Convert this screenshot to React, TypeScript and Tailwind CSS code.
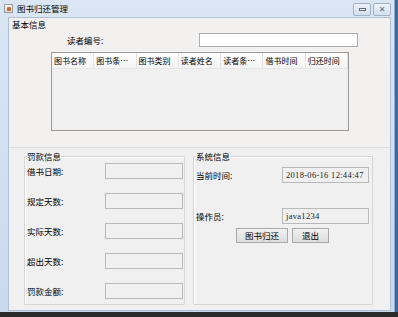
import React from "react";

const cjk = { fontFamily: '"Noto Sans CJK SC", "Noto Sans", sans-serif' };
const serif = { fontFamily: '"Liberation Serif", "DejaVu Serif", serif' };

const columns = ["图书名称", "图书条…", "图书类别", "读者姓名", "读者条…", "借书时间", "归还时间"];
const fineRows = ["借书日期:", "规定天数:", "实际天数:", "超出天数:", "罚款金额:"];

// Swing-style titled groupbox, title sits on the etched line
const GroupBox: React.FC<{ title: string; className: string; children: React.ReactNode }> = ({ title, className, children }) => (
  <fieldset className={`border border-[#d5d5d5] shadow-[inset_1px_1px_0_#ffffff] rounded-[1px] ${className}`}>
    <legend className="ml-[2px] px-0 text-[8.5px] leading-[10px] text-black">{title}</legend>
    {children}
  </fieldset>
);

const Field: React.FC<{ value?: string; className?: string }> = ({ value, className }) => (
  <div className={`h-[16px] border border-[#b9b9b9] bg-[#f0f0f0] flex items-center pl-[3px] text-[8.5px] tracking-[0.3px] text-[#222] ${className ?? ""}`} style={serif}>
    {value}
  </div>
);

export default function App() {
  return (
    <div className="w-[398px] h-[317px] bg-[#3a6aa0] overflow-hidden" style={cjk}>
      <div className="w-[395px] h-[312px] bg-gradient-to-b from-[#dbe6f4] to-[#c9d9ee] flex flex-col border-r border-[#8ea9cc]">
        {/* title bar */}
        <div className="h-[17px] flex items-center pl-[4px] pr-[3px] shrink-0">
          <div className="w-[9px] h-[9px] border border-[#9a9a9a] bg-gradient-to-b from-[#ffffff] to-[#d8d8d8] flex items-center justify-center">
            <div className="w-[4px] h-[4px] bg-[#c86b2a] rounded-[1px]" />
          </div>
          <span className="ml-[4px] text-[8.5px] leading-none text-black">图书归还管理</span>
          <div className="ml-auto flex gap-[2px] mt-[2px]">
            <div className="w-[18px] h-[13px] rounded-[2px] border border-[#9fb2c9] bg-gradient-to-b from-[#eef3f9] to-[#d3deeb] flex items-center justify-center">
              <div className="w-[7px] h-[3px] border border-[#5a6b80] bg-white" />
            </div>
            <div className="w-[18px] h-[13px] rounded-[2px] border border-[#9fb2c9] bg-gradient-to-b from-[#eef3f9] to-[#d3deeb] flex items-center justify-center text-[8px] leading-none text-[#5a6b80]" style={{ fontFamily: '"DejaVu Sans", sans-serif' }}>
              ✕
            </div>
          </div>
        </div>

        {/* content pane */}
        <div className="flex-1 ml-[8px] mr-[3px] mb-[1px] bg-[#f0f0f0] flex flex-col border border-[#aebfd6]">
          {/* 基本信息 */}
          <div className="h-[130px] shrink-0 bg-[#f3f0f0] border-b border-[#dcdcdc] flex flex-col">
            <div className="pl-[3px] pt-[1px] text-[8.5px] leading-[10px] text-black">基本信息</div>
            <div className="flex items-center mt-[4px] h-[14px]">
              <span className="ml-[58px] text-[8.5px] text-black">读者编号:</span>
              <div className="ml-[96px] w-[159px] h-[14px] border border-[#abadb3] bg-white" />
            </div>
            <div className="ml-[42px] mt-[5px] w-[298px] h-[79px] border border-[#9a9a9a] bg-[#f0f0f0]">
              <div className="h-[16px] grid grid-cols-7 bg-gradient-to-b from-[#ffffff] to-[#f4f4f4] border-b border-[#e6e6e6]">
                {columns.map(c => (
                  <div key={c} className="pl-[2px] flex items-center text-[8px] text-black border-r border-[#e2e2e2] whitespace-nowrap overflow-hidden">
                    {c}
                  </div>
                ))}
              </div>
            </div>
          </div>

          {/* lower area */}
          <div className="flex-1 flex items-start pt-[3px]">
            <GroupBox title="罚款信息" className="ml-[15px] w-[161px] h-[154px] flex flex-col">
              <div className="flex flex-col gap-[14px] pt-[2px]">
                {fineRows.map(label => (
                  <div key={label} className="flex items-center h-[16px]">
                    <span className="ml-[2px] w-[78px] text-[8.5px] text-black">{label}</span>
                    <Field className="w-[78px]" />
                  </div>
                ))}
              </div>
            </GroupBox>

            <GroupBox title="系统信息" className="ml-[8px] w-[180px] h-[154px] flex flex-col">
              <div className="flex items-center h-[16px] mt-[6px]">
                <span className="ml-[2px] w-[86px] text-[8.5px] text-black">当前时间:</span>
                <Field className="w-[87px]" value="2018-06-16 12:44:47" />
              </div>
              <div className="flex items-center h-[16px] mt-[25px]">
                <span className="ml-[2px] w-[86px] text-[8.5px] text-black">操作员:</span>
                <Field className="w-[87px]" value="java1234" />
              </div>
              <div className="flex mt-[4px] ml-[42px] gap-[4px]">
                <button className="w-[52px] h-[15px] border border-[#a9a9a9] bg-gradient-to-b from-[#f2f2f2] to-[#dcdcdc] text-[8.5px] leading-none text-black">图书归还</button>
                <button className="w-[37px] h-[15px] border border-[#a9a9a9] bg-gradient-to-b from-[#f2f2f2] to-[#dcdcdc] text-[8.5px] leading-none text-black">退出</button>
              </div>
            </GroupBox>
          </div>
        </div>
      </div>
      <div className="h-[5px] bg-[#2b2b2b]" />
    </div>
  );
}
